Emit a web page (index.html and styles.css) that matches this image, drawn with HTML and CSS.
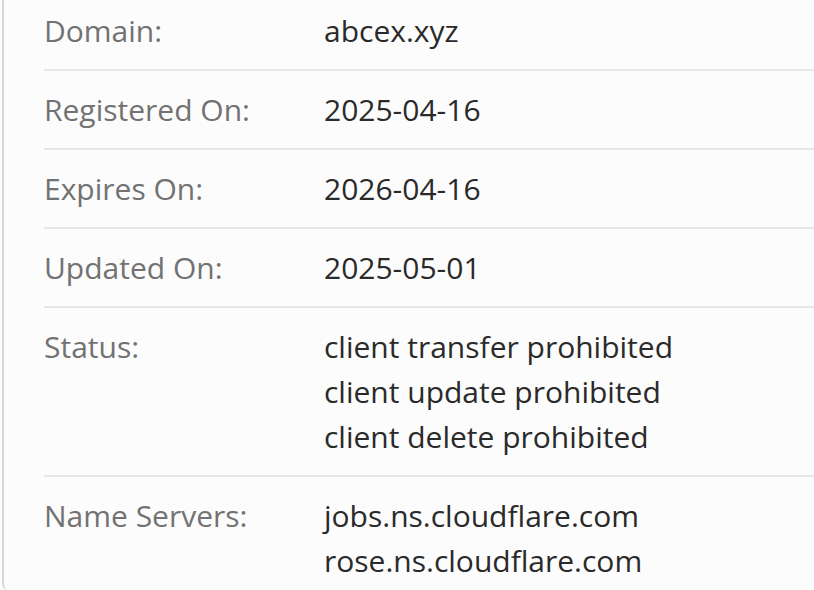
FILE: index.html
```html
<!DOCTYPE html>
<html lang="en">
<head>
<meta charset="utf-8">
<title>Domain info</title>
<link rel="stylesheet" href="styles.css">
</head>
<body>
<div class="card">
  <dl class="info">
    <div class="row">
      <dt class="label">Domain:</dt>
      <dd class="value">abcex.xyz</dd>
    </div>
    <div class="row">
      <dt class="label">Registered On:</dt>
      <dd class="value">2025-04-16</dd>
    </div>
    <div class="row">
      <dt class="label">Expires On:</dt>
      <dd class="value">2026-04-16</dd>
    </div>
    <div class="row">
      <dt class="label">Updated On:</dt>
      <dd class="value">2025-05-01</dd>
    </div>
    <div class="row">
      <dt class="label">Status:</dt>
      <dd class="value">client transfer prohibited<br>client update prohibited<br>client delete prohibited</dd>
    </div>
    <div class="row last">
      <dt class="label">Name Servers:</dt>
      <dd class="value">jobs.ns.cloudflare.com<br>rose.ns.cloudflare.com</dd>
    </div>
  </dl>
</div>
</body>
</html>
```

FILE: styles.css
```css
html, body {
  margin: 0;
  padding: 0;
  background: #ffffff;
  overflow: hidden;
}

body {
  font-family: "Open Sans", "Noto Sans", sans-serif;
  font-size: 30px;
  line-height: 45px;
}

.card {
  margin: -8px 0 0 2px;
  background: #fcfcfc;
  border-left: 2px solid #d7d7d7;
  border-bottom-left-radius: 6px;
  padding-left: 40px;
}

.info {
  margin: 0;
}

.row {
  display: grid;
  grid-template-columns: 280px 1fr;
  padding: 16px 0;
  border-bottom: 2px solid #e6e6e6;
}

.row.last {
  border-bottom: none;
  padding-bottom: 7px;
}

.label {
  margin: 0;
  color: #727272;
}

.value {
  margin: 0;
  color: #2a2a2a;
}
```
